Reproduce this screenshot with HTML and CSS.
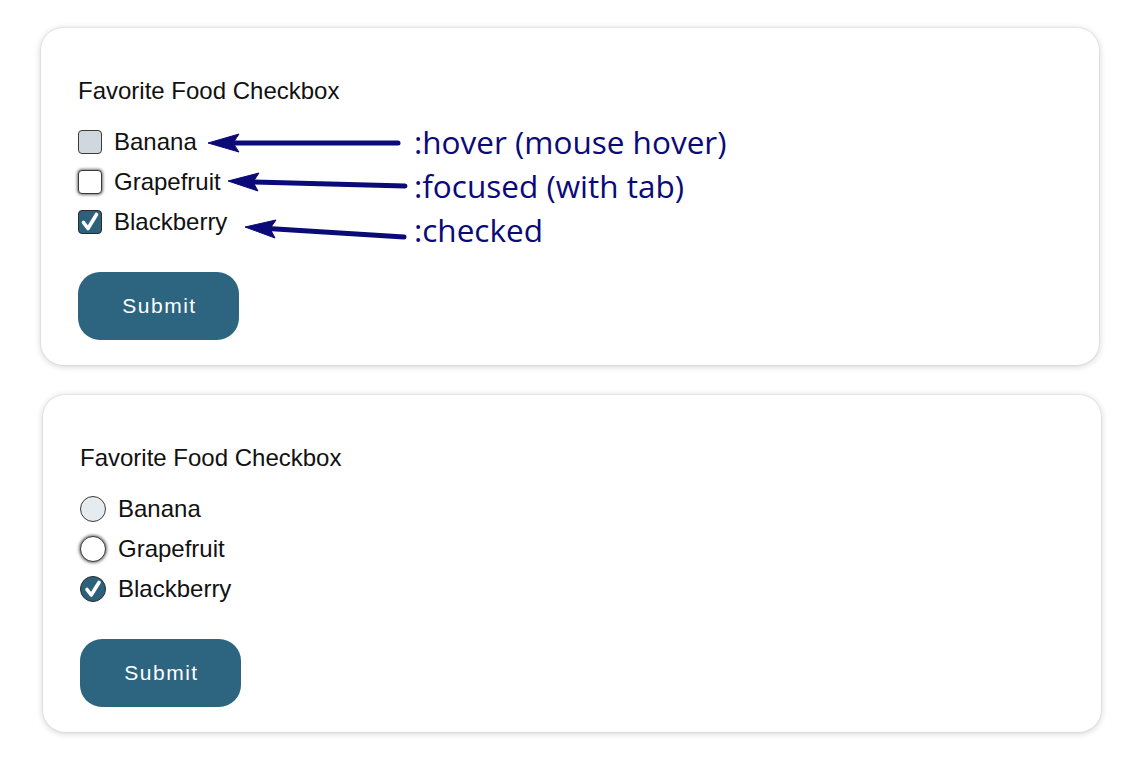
FILE: index.html
```html
<!DOCTYPE html>
<html>
<head>
<meta charset="utf-8">
<link rel="stylesheet" href="styles.css">
</head>
<body>
<div class="page">
  <form class="card card-first">
    <div class="title">Favorite Food Checkbox</div>
    <div class="options">
      <label class="option"><span class="box box-hover"></span><span class="label">Banana</span></label>
      <label class="option"><span class="box box-focus"></span><span class="label">Grapefruit</span></label>
      <label class="option"><span class="box box-checked"><svg viewBox="0 0 24 24" width="24" height="24"><path d="M5.5 12.5 L10 18.5 L18.5 4.5" fill="none" stroke="#fff" stroke-width="3.6" stroke-linecap="round" stroke-linejoin="round"/></svg></span><span class="label">Blackberry</span></label>
    </div>
    <button type="button" class="submit">Submit</button>

    <svg class="arrows" width="1058" height="337" viewBox="0 0 1058 337">
      <g fill="#0a0a78" stroke="#0a0a78">
        <line x1="190" y1="115" x2="357" y2="115" stroke-width="5" stroke-linecap="round"/>
        <polygon points="167,115 198,106 192,115 198,124" stroke-width="1"/>
        <line x1="210" y1="154" x2="364" y2="158" stroke-width="5" stroke-linecap="round"/>
        <polygon points="187,153 218,145 212,154 217,163" stroke-width="1"/>
        <line x1="227" y1="200.5" x2="363" y2="209" stroke-width="5" stroke-linecap="round"/>
        <polygon points="204,199 235,192 229,200.6 234,210" stroke-width="1"/>
      </g>
    </svg>
    <div class="notes">
      <div class="note">:hover (mouse hover)</div>
      <div class="note">:focused (with tab)</div>
      <div class="note">:checked</div>
    </div>
  </form>

  <form class="card card-second">
    <div class="title">Favorite Food Checkbox</div>
    <div class="options">
      <label class="option"><span class="radio radio-hover"></span><span class="label">Banana</span></label>
      <label class="option"><span class="radio radio-focus"></span><span class="label">Grapefruit</span></label>
      <label class="option"><span class="radio radio-checked"><svg viewBox="0 0 26 26" width="26" height="26"><path d="M7 13.5 L11.2 19 L19 6.5" fill="none" stroke="#fff" stroke-width="3.6" stroke-linecap="round" stroke-linejoin="round"/></svg></span><span class="label">Blackberry</span></label>
    </div>
    <button type="button" class="submit">Submit</button>
  </form>
</div>
</body>
</html>
```

FILE: styles.css
```css
* { box-sizing: border-box; }
html, body {
  margin: 0;
  padding: 0;
  background: #ffffff;
}
body {
  font-family: "Liberation Sans", Arial, sans-serif;
  color: #111111;
}
.page {
  padding: 28px 0 26px 41px;
  display: flex;
  flex-direction: column;
}
.card {
  position: relative;
  width: 1058px;
  height: 337px;
  margin: 0;
  padding: 49px 37px 25px;
  background: #ffffff;
  border-radius: 22px;
  box-shadow: 0 0 0 1px rgba(0,0,0,0.04), 0 1px 7px rgba(0,0,0,0.2);
  display: flex;
  flex-direction: column;
  align-items: flex-start;
}
.card-second {
  margin: 30px 0 0 2px;
}
.title {
  font-size: 24px;
  line-height: 28px;
  color: #111;
}
.options {
  margin-top: 17px;
  display: flex;
  flex-direction: column;
}
.option {
  height: 40px;
  display: flex;
  align-items: center;
  gap: 12px;
  font-size: 24px;
}
.label { color: #111; }
.box {
  width: 24px;
  height: 24px;
  border: 1.5px solid #3a3a3a;
  border-radius: 4px;
  background: #fff;
  display: flex;
  align-items: center;
  justify-content: center;
}
.box svg { display: block; margin: -1.5px; }
.box-hover { background: #cfd8de; }
.box-focus { box-shadow: 0 0 3px 1px rgba(0,0,0,0.55); }
.box-checked { background: #2c617b; border-color: #2a2a2a; }
.radio {
  width: 26px;
  height: 26px;
  border: 1.5px solid #3a3a3a;
  border-radius: 50%;
  background: #fff;
  display: flex;
  align-items: center;
  justify-content: center;
}
.radio svg { display: block; margin: -1.5px; }
.radio-hover { background: #e5ebee; }
.radio-focus { box-shadow: 0 0 3px 1px rgba(0,0,0,0.55); }
.radio-checked { background: #2c617b; border-color: #2a2a2a; }
.submit {
  margin-top: 30px;
  width: 161px;
  height: 68px;
  border: none;
  border-radius: 22px;
  background: #2d6580;
  color: #ffffff;
  font-family: "Liberation Sans", Arial, sans-serif;
  font-size: 21px;
  letter-spacing: 1.5px;
  padding: 0 0 0 2px;
}
.arrows {
  position: absolute;
  left: 0;
  top: 0;
  pointer-events: none;
}
.notes {
  position: absolute;
  left: 373px;
  top: 92px;
  display: flex;
  flex-direction: column;
}
.note {
  font-family: "Open Sans", "Noto Sans", sans-serif;
  font-size: 31.5px;
  line-height: 44px;
  color: #0a0a78;
  white-space: nowrap;
}
```
